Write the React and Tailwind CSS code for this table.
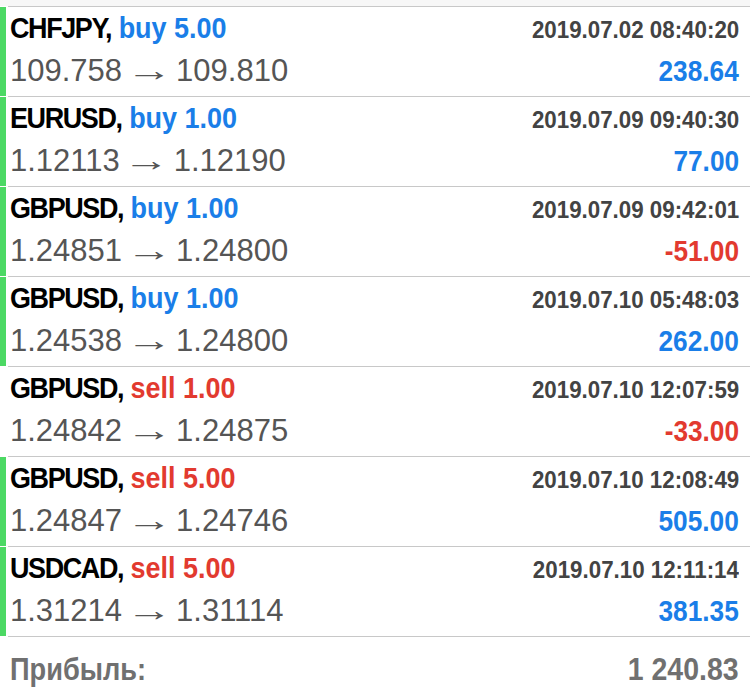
import React from 'react';

const TRADES = [
  { symbol: 'CHFJPY', side: 'buy', volume: '5.00', time: '2019.07.02 08:40:20', open: '109.758', close: '109.810', profit: '238.64', mark: true },
  { symbol: 'EURUSD', side: 'buy', volume: '1.00', time: '2019.07.09 09:40:30', open: '1.12113', close: '1.12190', profit: '77.00', mark: true },
  { symbol: 'GBPUSD', side: 'buy', volume: '1.00', time: '2019.07.09 09:42:01', open: '1.24851', close: '1.24800', profit: '-51.00', mark: true },
  { symbol: 'GBPUSD', side: 'buy', volume: '1.00', time: '2019.07.10 05:48:03', open: '1.24538', close: '1.24800', profit: '262.00', mark: true },
  { symbol: 'GBPUSD', side: 'sell', volume: '1.00', time: '2019.07.10 12:07:59', open: '1.24842', close: '1.24875', profit: '-33.00', mark: false },
  { symbol: 'GBPUSD', side: 'sell', volume: '5.00', time: '2019.07.10 12:08:49', open: '1.24847', close: '1.24746', profit: '505.00', mark: true },
  { symbol: 'USDCAD', side: 'sell', volume: '5.00', time: '2019.07.10 12:11:14', open: '1.31214', close: '1.31114', profit: '381.35', mark: true },
];

// condensed bold look: Liberation Sans Bold squeezed horizontally
const BOLD = "inline-block font-['Liberation_Sans',Arial,sans-serif] font-bold whitespace-nowrap";
const REG = "font-['Liberation_Sans',Arial,sans-serif]";

function TradeRow({ t }) {
  const sideColor = t.side === 'buy' ? 'text-[#1a7ee8]' : 'text-[#e23a2f]';
  const profitColor = t.profit.startsWith('-') ? 'text-[#e23a2f]' : 'text-[#1a7ee8]';
  return (
    <div className="flex h-[90px]">
      <div className={`w-[6px] mt-px ${t.mark ? 'bg-[#4cd964]' : 'bg-transparent'}`} />
      <div className="flex-1 ml-[2px] border-t border-[#c8c8c8] pl-[2px] pr-[11px] pt-[3px]">
        <div className="flex items-baseline justify-between h-[36px] leading-[36px]">
          <span className={`${BOLD} text-[29px] origin-left scale-x-[0.93]`}>
            <span className="text-black tracking-[-1.5px]">{t.symbol},</span>{' '}
            <span className={sideColor}>{t.side} {t.volume}</span>
          </span>
          <span className={`${BOLD} text-[23.5px] text-[#434343] origin-right scale-x-[0.95]`}>{t.time}</span>
        </div>
        <div className="flex items-baseline justify-between h-[36px] leading-[36px] mt-[7px]">
          <span className={`${REG} text-[31px] text-[#555] whitespace-nowrap`}>
            {t.open}
            <span className="inline-block w-[54px] text-center">
              <span className="inline-block scale-x-[1.5]">→</span>
            </span>
            {t.close}
          </span>
          <span className={`${BOLD} text-[30px] origin-right scale-x-[0.875] ${profitColor}`}>{t.profit}</span>
        </div>
      </div>
    </div>
  );
}

export default function App() {
  return (
    <div className="w-[750px] h-[689px] bg-white overflow-hidden">
      <div className="h-[6px] bg-[#f7f7f7]" />
      {TRADES.map((t, i) => (
        <TradeRow key={i} t={t} />
      ))}
      <div className="ml-[8px] border-t border-[#c8c8c8] pl-[2px] pr-[11px] pt-[14px]">
        <div className="flex items-baseline justify-between text-[32px] text-[#707070] leading-[36px]">
          <span className={`${BOLD} origin-left scale-x-[0.85]`}>Прибыль:</span>
          <span className={`${BOLD} origin-right scale-x-[0.89]`}>1 240.83</span>
        </div>
      </div>
    </div>
  );
}
